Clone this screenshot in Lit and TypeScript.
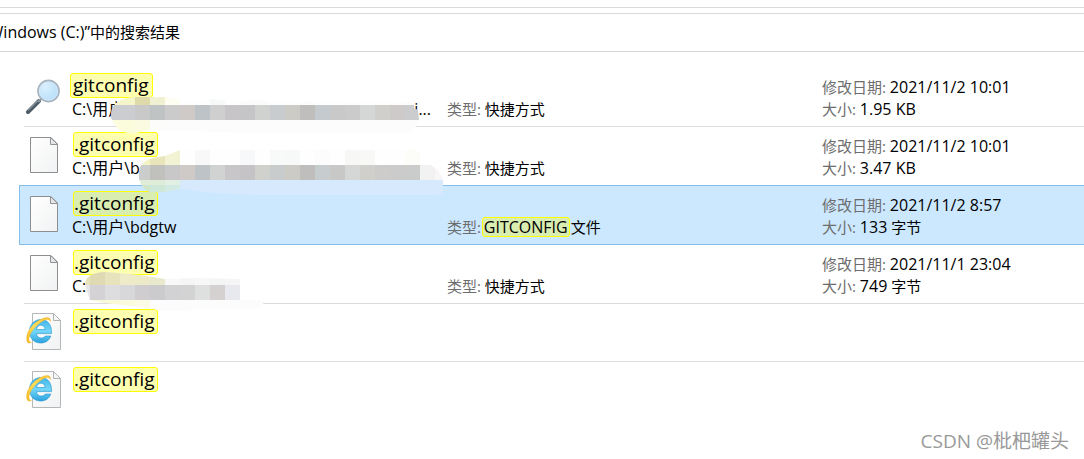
import { LitElement, html, svg, css, nothing } from "lit";
import { customElement, property } from "lit/decorators.js";
import { classMap } from "lit/directives/class-map.js";

type IconName = "search" | "file" | "web";

interface Mask {
  id: string;
  outline: string;
  /** Horizontal bands of 15px wide cells. */
  bands: { x: number; y: number; h: number; colors: string[] }[];
}

interface Result {
  icon: IconName;
  name: string;
  match: string;
  path?: string;
  tail?: string;
  type?: string;
  typeMatch?: string;
  date?: string;
  size?: string;
  unit?: string;
  selected?: boolean;
  mask?: Mask;
}

const results: Result[] = [
  {
    icon: "search", name: "gitconfig", match: "whole", path: "C:\\用户", tail: "i...",
    type: "快捷方式", date: "2021/11/2 10:01", size: "1.95 KB",
    mask: {
      id: "mask-a",
      outline: "M111 46C111 36 120 30 134 29H165L195 33L211 31L224 32L234 33L260 32L275 34H410L414 37V40L418 42L419 52Q416 65 400 66H270L220 64L150 62L136 65Q122 66 117 60L111 50Z",
      bands: [
        { x: 105, y: 28, h: 9, colors: ["#f6f6cf", "#f5f5ca", "#dedaaa", "#f0f1d2", "#fdfdf2", "#fefefe", "#fefefe", "#f7f8f8", "#fefefe", "#fbfbfb", "#fafbfa", "#fefefe", "#fefefe", "#fcfcfb", "#fefefe", "#fefefe", "#fdfdfd", "#fefefe", "#fefefe", "#fdfdfd", "#fcfcfc"] },
        { x: 105, y: 37, h: 15, colors: ["#cbcccf", "#cbcdd0", "#c8c9c8", "#c0c3c3", "#cbcbcb", "#cfcac7", "#bdc3c7", "#cfcfcf", "#c8c5c8", "#c5c4c6", "#d0d2cf", "#c8cccf", "#cccbc6", "#c0bebc", "#c5cacf", "#c9c9ca", "#cccbcc", "#d5d7d6", "#d1cfcc", "#cdcac9", "#cacccd", "#c8c6c8"] },
        { x: 105, y: 52, h: 16, colors: ["#fcfcde", "#fbfcdc", "#fafbe0", "#fcfcfa", ...Array(18).fill("#fcfcfc")] },
      ],
    },
  },
  {
    icon: "file", name: ".gitconfig", match: "rest", path: "C:\\用户\\bdg",
    type: "快捷方式", date: "2021/11/2 10:01", size: "3.47 KB",
    mask: {
      id: "mask-b",
      outline: "M139 46C140 34 148 31 165 29L180 23H416L420 26V38H431Q442 45 443 54V65Q442 68 437 68H250L215 66L180 62L165 65H150Q143 64 139 52Z",
      bands: [
        { x: 135, y: 23, h: 15, colors: ["#f3f3c8", "#e7e5b9", "#f2f2d4", "#fefefe", "#f8f8f8", "#fefefe", "#fefefe", "#f7f8f9", "#fefefe", "#f8f9f9", "#f7f9f9", "#fefefe", "#fcfcfc", "#fefefe", "#f7f7f5", "#f8f9f6", "#fefefe", "#fefefe", "#fcfdf9", "#f8f8f8"] },
        { x: 135, y: 38, h: 15, colors: ["#cbcccc", "#c0c0bd", "#c8c8c9", "#cfcac7", "#bdc3c7", "#d1d2d2", "#c8c6c8", "#c5c3c5", "#d0d0cc", "#c8cccd", "#cccbc6", "#c0bebc", "#c7cccf", "#c8c9c6", "#d5d7d7", "#d1cfcc", "#cdcccb", "#cbcbcb", "#cacccb", "#f2f2f3", "#f8f6f7"] },
        { x: 135, y: 53, h: 5, colors: ["#e0edd8", "#deedd8", "#e1f0e3", ...Array(18).fill("#d7e9fc")] },
        { x: 135, y: 58, h: 12, colors: ["#d0e5ca", "#cfe7d7", "#d3e9e4", ...Array(18).fill("#d7e9fc")] },
      ],
    },
  },
  {
    icon: "file", name: ".gitconfig", match: "rest", path: "C:\\用户\\bdgtw",
    type: "文件", typeMatch: "GITCONFIG", date: "2021/11/2 8:57", size: "133", unit: "字节", selected: true,
  },
  {
    icon: "file", name: ".gitconfig", match: "rest", path: "C:\\",
    type: "快捷方式", date: "2021/11/1 23:04", size: "749", unit: "字节",
    mask: {
      id: "mask-c",
      outline: "M85 40C85 32 92 27 105 27L120 28L140 30L165 34L195 33L240 34V55H265L262 61L250 65H195L165 66L140 62L105 58L90 55Z",
      bands: [
        { x: 75, y: 27, h: 13, colors: ["#e6e2bc", "#dfdab4", "#e7e3bd", "#edebc8", "#eceac9", "#e9e9cd", "#f8f8f8", "#f5f5f5", "#f7f7f7", "#f3f4f4", "#f5f5f5"] },
        { x: 75, y: 40, h: 15, colors: ["#e6e6e9", "#d4d2d5", "#dddddf", "#d8d8da", "#cfcdd0", "#cbcacd", "#d2d2d4", "#d4d3d4", "#dee0df", "#d5d1d0", "#e8e9ee"] },
        { x: 75, y: 55, h: 14, colors: ["#f9f9dc", "#f9f9d8", "#fafad8", "#fafadc", "#fbfbe6", ...Array(9).fill("#fcfcfc")] },
      ],
    },
  },
  { icon: "web", name: ".gitconfig", match: "rest" },
  { icon: "web", name: ".gitconfig", match: "rest" },
];

@customElement("result-icon")
class ResultIcon extends LitElement {
  @property() name: IconName = "file";

  static styles = css`
    :host { display: block; width: 40px; height: 40px; }
    .glyph { display: block; width: 40px; height: 40px; }
  `;

  render() {
    return html`<svg class="glyph" viewBox="0 0 40 40" aria-hidden="true">
      <defs>
        <linearGradient id="paper" x1="0" y1="0" x2="1" y2="1">
          <stop offset="0" stop-color="#ffffff" /><stop offset="1" stop-color="#f1f2f3" />
        </linearGradient>
        <radialGradient id="lens" cx=".35" cy=".3" r=".8">
          <stop offset="0" stop-color="#d9effd" /><stop offset="1" stop-color="#b4defa" />
        </radialGradient>
        <linearGradient id="blue" x1="0" y1="0" x2="0" y2="1">
          <stop offset="0" stop-color="#3fb4ea" /><stop offset=".5" stop-color="#74d6f9" /><stop offset="1" stop-color="#2ba3de" />
        </linearGradient>
        <linearGradient id="gold" x1="0" y1="1" x2="1" y2="0">
          <stop offset="0" stop-color="#f6b820" /><stop offset=".5" stop-color="#ffde58" /><stop offset="1" stop-color="#f8c22f" />
        </linearGradient>
      </defs>
      ${this.name === "search" ? this.search() : this.name === "file" ? this.file() : this.web()}
    </svg>`;
  }

  private search() {
    return svg`
      <path d="M4 36L15 25" stroke="#4c5a64" stroke-width="4" stroke-linecap="round" />
      <path d="M4.2 34.3L13.5 25" stroke="#8995a0" stroke-width="1.2" />
      <path d="M14 26L18 22" stroke="#8d9ba8" stroke-width="2" />
      <circle cx="24.5" cy="15" r="10.5" fill="url(#lens)" stroke="#aab4bf" stroke-width="1.8" />
      <circle cx="24.5" cy="15" r="9.2" fill="none" stroke="#d8edfb" stroke-width=".7" />`;
  }

  private file() {
    return svg`
      <path d="M6.5 2.5H27L33.5 9V37.5H6.5Z" fill="url(#paper)" stroke="#8c8e90" />
      <path d="M26.5 2.5V9.5H33.5Z" fill="#e4e6e8" stroke="#919395" />`;
  }

  private web() {
    return svg`
      <path d="M8.5 1.5H29.5L36.5 8.5V37.5H8.5Z" fill="url(#paper)" stroke="#b5b6b8" />
      <path d="M29.5 1.5V8.5H36.5Z" fill="#f5f6f7" stroke="#b0b1b3" />
      <path fill-rule="evenodd" fill="url(#blue)" stroke="#2595cf" stroke-width=".6" d="M27.5 21.6H12.6C12.8 24.6 14.6 26 17.2 26C19.2 26 20.5 25.3 21.3 24H26.8C25.2 28.7 21.5 31 16.7 31C10.3 31 5.5 26.5 5.5 19.5C5.5 12.5 10.3 7.6 16.7 7.6C23.8 7.6 28 12.8 27.5 21.6ZM12.6 17.5H21.1C20.8 14.6 19.2 13.2 16.8 13.2C14.5 13.2 12.9 14.8 12.6 17.5Z" />
      <path fill="url(#gold)" stroke="#e3a323" stroke-width=".3" d="M26.6 9.6C27 4.6 22 4.4 16 7.8C8 12.2 2.2 20 2.6 27C2.8 31.4 5 31.6 7.6 30.6C5 30.2 4.6 28.4 5.2 25.6C6.6 19.6 12 13.2 18.6 9.2C22.6 6.9 25 7 26.6 9.6Z" />`;
  }
}

@customElement("app-root")
class AppRoot extends LitElement {
  static styles = css`
    :host {
      display: block;
      position: relative;
      min-height: 100vh;
      overflow: hidden;
      background: #fff;
      color: #000;
      font: 15px/22px "Open Sans", "Noto Sans CJK SC", sans-serif;
    }
    .toolbar { height: 7px; border-bottom: 1px solid #dadada; }
    .heading {
      display: flex;
      align-items: center;
      box-sizing: border-box;
      height: 39px;
      margin: 5px 0 0;
      padding-bottom: 2px;
      border-top: 1px solid #dadada;
      border-bottom: 1px solid #d6d6d6;
      font-size: 15px;
      font-weight: 400;
      white-space: nowrap;
    }
    .heading-text { margin-left: -17px; }
    .value { font-size: 16px; }
    .list { margin: 0; padding: 16px 0 0; list-style: none; }
    .item { position: relative; }
    .row {
      display: grid;
      grid-template-columns: 48px minmax(0, 375px) minmax(0, 375px) minmax(200px, 1fr);
      box-sizing: border-box;
      height: 59px;
      margin-left: 24px;
      border-bottom: 1px solid #dcdcdc;
    }
    .row.compact { height: 58px; }
    .item:last-child .row { border-bottom-color: transparent; }
    .row.selected {
      height: 60px;
      margin: -1px 0 0 19px;
      padding-left: 4px;
      border: 1px solid #84bfec;
      border-right: 0;
      background: #cce8ff;
    }
    .icon { padding-top: 8px; }
    .name { padding-top: 5px; white-space: nowrap; }
    .title { display: block; height: 25px; font-size: 19px; line-height: 23px; }
    .title .hit { display: inline-block; height: 23px; padding: 0 3px 0 2px; margin-left: -2px; }
    .title .hit.rest { padding: 0 2px 0 0; margin-left: 1px; }
    .hit {
      border: 1px solid #ffff00;
      border-radius: 3px;
      background: #ffffb0;
      color: inherit;
    }
    .selected .hit { background: #d9edb0; }
    .path { display: flex; justify-content: space-between; padding-right: 16px; font-size: 16px; }
    .details { display: flex; flex-direction: column; padding: 8px 0 5px; white-space: nowrap; }
    .type { padding-top: 30px; }
    .type .hit { display: inline-block; padding: 0 1px; margin: 0 1px 0 -3px; font-size: 16px; line-height: 18px; }
    .label { color: #6d6d6d; }
    .mask {
      position: absolute;
      z-index: 1;
      top: 0;
      left: 0;
      width: 460px;
      height: 72px;
      pointer-events: none;
    }
    .watermark {
      position: absolute;
      right: 15px;
      bottom: 5px;
      color: #999;
      font-size: 19px;
      line-height: 26px;
    }
  `;

  private renderMask(mask: Mask) {
    return html`<svg class="mask" viewBox="0 0 460 72" shape-rendering="crispEdges" aria-hidden="true">
      <clipPath id=${mask.id}><path d=${mask.outline} /></clipPath>
      <g clip-path="url(#${mask.id})">
        ${mask.bands.map((b) => b.colors.map((c, i) =>
          svg`<rect x=${b.x + i * 15} y=${b.y} width="15" height=${b.h} fill=${c} />`))}
      </g>
    </svg>`;
  }

  private renderRow(r: Result) {
    return html`<li class="item">
      <div class=${classMap({ row: true, selected: !!r.selected, compact: !r.type })}>
        <result-icon class="icon" .name=${r.icon}></result-icon>
        <div class="name">
          <span class="title"><mark class="hit ${r.match}">${r.name}</mark></span>
          ${r.path ? html`<span class="path"><span>${r.path}</span><span>${r.tail ?? nothing}</span></span>` : nothing}
        </div>
        ${r.type ? html`
          <div class="details type">
            <span><span class="label">类型:</span> ${r.typeMatch ? html`<mark class="hit">${r.typeMatch}</mark>` : nothing}${r.type}</span>
          </div>
          <div class="details">
            <span><span class="label">修改日期:</span> <span class="value">${r.date}</span></span>
            <span><span class="label">大小:</span> <span class="value">${r.size}</span> ${r.unit ?? nothing}</span>
          </div>` : nothing}
      </div>
      ${r.mask ? this.renderMask(r.mask) : nothing}
    </li>`;
  }

  render() {
    return html`
      <div class="toolbar"></div>
      <h1 class="heading"><span class="heading-text"><span class="value">“Windows (C:)”</span>中的搜索结果</span></h1>
      <ul class="list">${results.map((r) => this.renderRow(r))}</ul>
      <div class="watermark">CSDN @枇杷罐头</div>
    `;
  }
}
